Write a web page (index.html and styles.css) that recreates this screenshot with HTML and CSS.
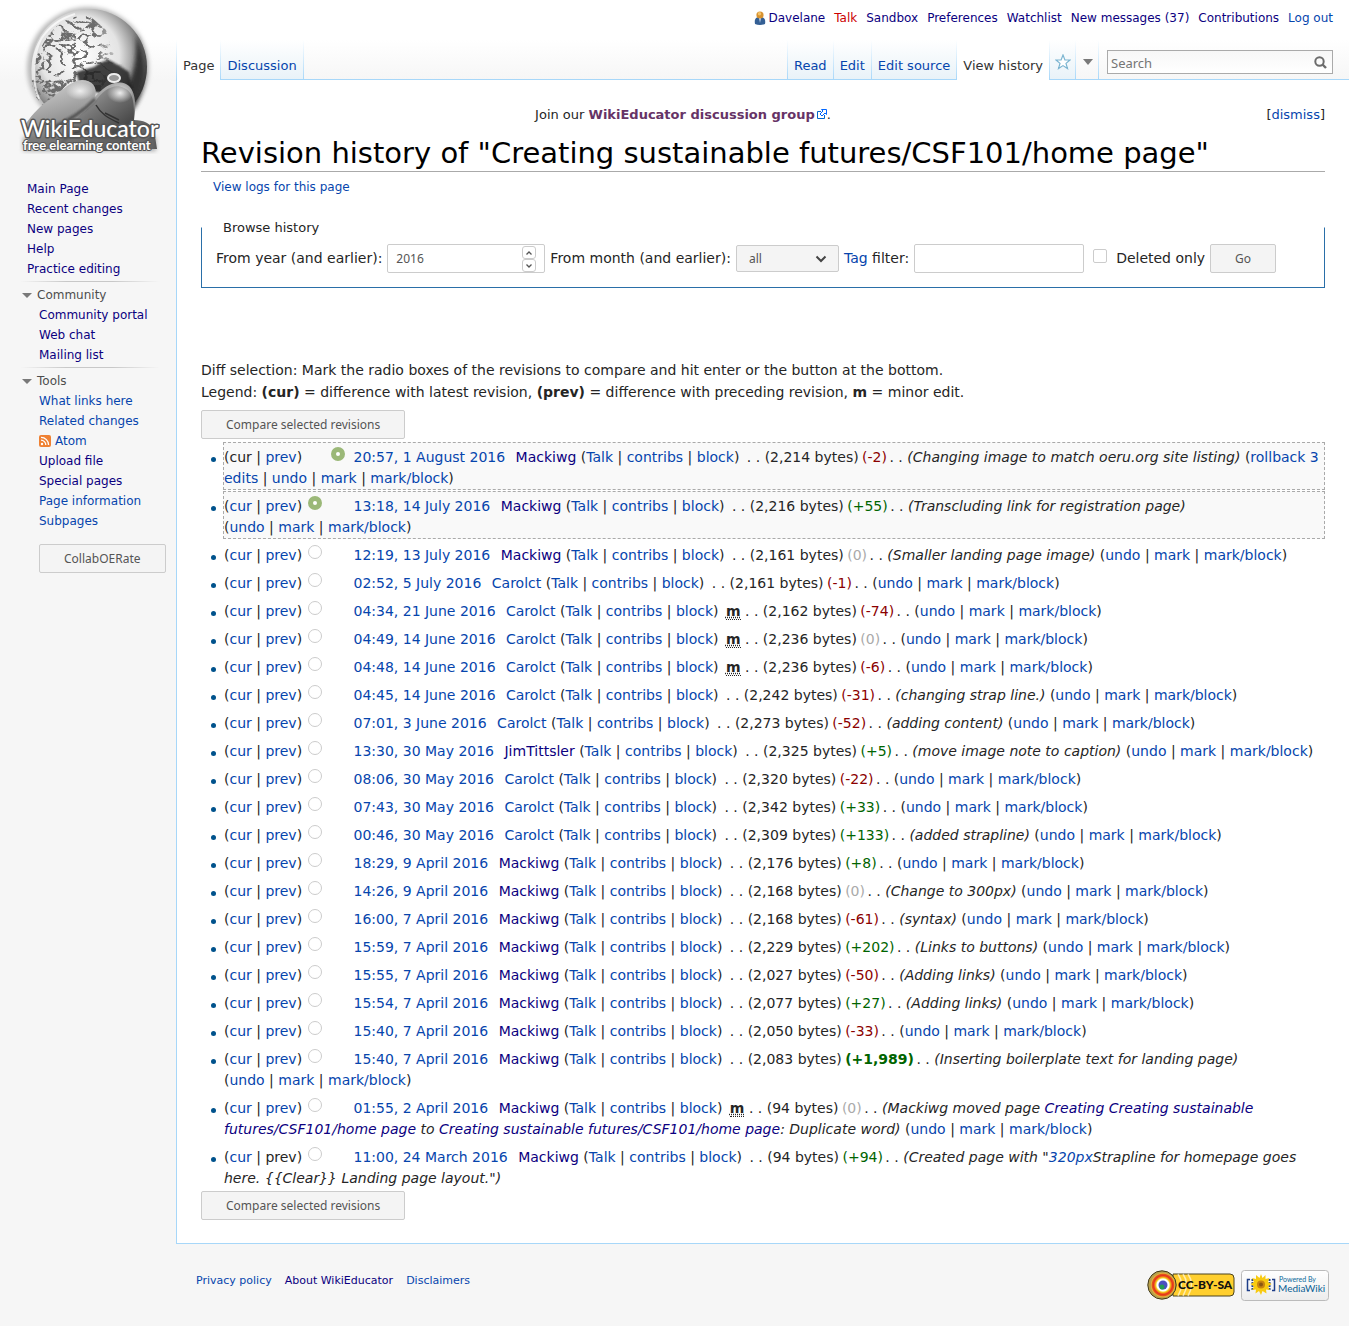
FILE: index.html
```html
<!DOCTYPE html>
<html lang="en">
<head>
<meta charset="utf-8">
<meta name="viewport" content="width=device-width, initial-scale=1">
<title>Revision history of "Creating sustainable futures/CSF101/home page" - WikiEducator</title>
<link rel="stylesheet" href="styles.css">
</head>
<body>
<div class="page">
<aside class="sidebar">
<a class="logo" href="#" aria-label="WikiEducator">
<svg width="160" height="160" viewBox="0 0 160 160">
<defs>
<radialGradient id="sphere" cx=".42" cy=".4" r=".62"><stop offset="0" stop-color="#fff"/><stop offset=".55" stop-color="#e4e4e4"/><stop offset=".8" stop-color="#8a8a8a"/><stop offset="1" stop-color="#333"/></radialGradient>
<linearGradient id="finger" x1="0" y1="0" x2="1" y2="1"><stop offset="0" stop-color="#ccc"/><stop offset=".45" stop-color="#777"/><stop offset="1" stop-color="#222"/></linearGradient>
<linearGradient id="thumb" x1="0" y1="0" x2=".6" y2="1"><stop offset="0" stop-color="#ddd"/><stop offset=".55" stop-color="#929292"/><stop offset="1" stop-color="#4c4c4c"/></linearGradient>
<radialGradient id="tip"><stop offset="0" stop-color="#eee"/><stop offset="1" stop-color="#eee" stop-opacity="0"/></radialGradient>
<linearGradient id="fade"><stop offset="0" stop-color="#fff"/><stop offset=".55" stop-color="#fff"/><stop offset=".8" stop-color="#000"/></linearGradient>
<mask id="land"><rect x="30" y="8" width="118" height="110" fill="url(#fade)"/></mask>
<filter id="relief" x="0" y="0" width="1" height="1"><feTurbulence type="turbulence" baseFrequency=".08 .11" numOctaves="4" seed="8"/><feColorMatrix values="0 0 0 0 .15  0 0 0 0 .15  0 0 0 0 .15  -10 0 0 0 2.8"/><feComposite in2="SourceGraphic" operator="in"/></filter>
<filter id="soft" x="-.2" y="-.2" width="1.4" height="1.4"><feGaussianBlur stdDeviation="2"/></filter>
<filter id="edge" x="-.2" y="-.2" width="1.4" height="1.4"><feGaussianBlur stdDeviation="1"/></filter>
</defs>
<circle cx="88" cy="68" r="61" fill="#bbb" filter="url(#soft)"/>
<circle cx="89" cy="67" r="58" fill="url(#sphere)"/>
<path d="M136 35c12 24 11 52-3 75l-8-20c10-17 12-32 11-55Z" fill="#333" filter="url(#soft)"/>
<g mask="url(#land)"><path d="M48 36C61 18 79 14 91 17l15 13 6 22 14 15-2 22-34 4-44 16-11-13c-8-21 0-41 13-60Z" fill="#000" filter="url(#relief)"/></g>
<path d="M33 80c-4-31 12-57 42-66M42 37c-10 19-10 45-3 62" fill="none" stroke="#fff" stroke-width="2" opacity=".7"/>
<path d="M76 72q10-3 18-5 8-6 15-7 10 5 20 12l4 20-32 1-20-4Z" fill="#222" opacity=".85" filter="url(#edge)"/>
<ellipse cx="114" cy="78" rx="6" ry="4" fill="#999" stroke="#eee" stroke-width="2"/>
<path d="M24 126c6-8 13-18 25-26 10-7 22-20 33-20 10 0 16 7 13 17 8-10 20-18 31-13 9 4 11 20 8 36 10 0 17 4 20 10l3 19H32Z" fill="url(#thumb)"/>
<path d="M95 102c8-12 19-19 29-14 11 4 10 20 10 35l-4 28H50c6-16 27-32 45-49Z" fill="url(#finger)"/>
<path d="M51 129c12-7 28-13 44-30M61 143c12-12 24-14 37-17" fill="none" stroke="#222" stroke-width="3" opacity=".6" filter="url(#edge)"/>
<path d="M96 105c5 9 12 13 23 18m-14-10 14 7m3 22 13-7" fill="none" stroke="#333" stroke-width="1.500"/>
<ellipse cx="80" cy="91" rx="14" ry="9" fill="url(#tip)"/><ellipse cx="120" cy="93" rx="13" ry="10" fill="url(#tip)"/>
<path d="M134 122c10-3 17 3 19 13l-19 13Z" fill="#666"/>
<rect x="23" y="137" width="133" height="14" fill="#777" opacity=".6" filter="url(#soft)"/>
<text class="logo-name" x="21" y="137">WikiEducator</text>
<text class="logo-motto" x="23" y="150">free elearning content</text>
</svg></a>
<nav aria-label="Navigation">
<ul class="side-list main-links">
<li><a class="v" href="#">Main Page</a></li>
<li><a class="v" href="#">Recent changes</a></li>
<li><a class="v" href="#">New pages</a></li>
<li><a class="v" href="#">Help</a></li>
<li><a class="v" href="#">Practice editing</a></li>
</ul>
<section class="portal"><h2>Community</h2>
<ul class="side-list">
<li><a class="v" href="#">Community portal</a></li>
<li><a class="v" href="#">Web chat</a></li>
<li><a class="v" href="#">Mailing list</a></li>
</ul></section>
<section class="portal"><h2>Tools</h2>
<ul class="side-list">
<li><a href="#">What links here</a></li>
<li><a href="#">Related changes</a></li>
<li><a class="feed" href="#"><svg width="12" height="12" viewBox="0 0 12 12"><rect width="12" height="12" rx="2" fill="#ef8133"/><circle cx="3" cy="9" r="1.2" fill="#fff"/><path d="M2 5.2a4.8 4.8 0 0 1 4.8 4.8M2 2.4A7.6 7.6 0 0 1 9.6 10" fill="none" stroke="#fff" stroke-width="1.3"/></svg>Atom</a></li>
<li><a class="v" href="#">Upload file</a></li>
<li><a class="v" href="#">Special pages</a></li>
<li><a href="#">Page information</a></li>
<li><a href="#">Subpages</a></li>
</ul></section>
<button class="btn collab" type="button">CollabOERate</button>
</nav>
</aside>
<div class="column">
<header>
<ul class="personal">
<li><svg width="12" height="14" viewBox="0 0 12 14"><path d="M1 13c-1-5 1-7 5-7s6 2 5 7c-3 1.3-7 1.3-10 0Z" fill="#345f94"/><path d="m5 7 1 5 1-5Z" fill="#cde"/><circle cx="6" cy="4" r="3.6" fill="#d8922f"/><circle cx="5.5" cy="2.8" r="1.7" fill="#f3c26a"/></svg><a class="v" href="#">Davelane</a></li>
<li><a class="new" href="#">Talk</a></li>
<li><a class="v" href="#">Sandbox</a></li>
<li><a class="v" href="#">Preferences</a></li>
<li><a class="v" href="#">Watchlist</a></li>
<li><a class="v" href="#">New messages (37)</a></li>
<li><a class="v" href="#">Contributions</a></li>
<li><a href="#">Log out</a></li>
</ul>
<div class="tabbar">
<ul class="tabs">
<li class="selected"><a href="#">Page</a></li>
<li><a href="#">Discussion</a></li>
</ul>
<ul class="tabs views">
<li><a href="#">Read</a></li>
<li><a href="#">Edit</a></li>
<li><a href="#">Edit source</a></li>
<li class="selected"><a href="#">View history</a></li>
<li class="watch"><a href="#" aria-label="Watch"><svg width="16" height="16" viewBox="0 0 16 16"><path d="m8 1 1.9 5H15l-4 3.4 1.5 5.1L8 11.6l-4.500 2.900L5 9.400 1 6h5.100Z" fill="#fff" stroke="#7cb5d1" stroke-width="1.200"/></svg></a></li>
<li class="more"><button type="button" aria-label="More"><svg width="10" height="6" viewBox="0 0 10 6"><path d="M0 0h10L5 6Z" fill="#797979"/></svg></button></li>
</ul>
<form class="search"><input type="search" placeholder="Search" aria-label="Search"><button type="button" aria-label="Go"><svg width="13" height="13" viewBox="0 0 13 13"><circle cx="5.500" cy="5.500" r="4.200" fill="none" stroke="#6c6c6c" stroke-width="2"/><path d="m8.500 8.500 3.500 3.500" stroke="#6c6c6c" stroke-width="2.400"/></svg></button></form>
</div>
</header>
<main class="content">
<div class="notice"><p>Join our <a class="group" href="#">WikiEducator discussion group<svg width="10" height="10" viewBox="0 0 10 10"><path d="M4 2.500H.5v7h7V6" fill="#fff" stroke="#06c"/><path d="M4.500.5h5v5L8 4 5 7 3 5l3-3Z" fill="#fff" stroke="#06f"/></svg></a>.</p><div class="dismiss">[<a href="#">dismiss</a>]</div></div>
<h1>Revision history of "Creating sustainable futures/CSF101/home page"</h1>
<p class="sub"><a href="#">View logs for this page</a></p>
<form>
<fieldset>
<legend>Browse history</legend>
<div class="filters">
<label for="year">From year (and earlier):</label>
<span class="number"><input id="year" type="number" value="2016"><span class="steps"><button type="button" aria-label="Later"><svg width="6" height="4" viewBox="0 0 6 4"><path d="m.5 3.500 2.500-2.500 2.500 2.500" fill="none" stroke="#555" stroke-width="1.300"/></svg></button><button type="button" aria-label="Earlier"><svg width="6" height="4" viewBox="0 0 6 4"><path d="m.5.500 2.500 2.500 2.500-2.500" fill="none" stroke="#555" stroke-width="1.300"/></svg></button></span></span>
<label for="month">From month (and earlier):</label>
<span class="pick"><select id="month"><option>all</option></select><svg width="12" height="8" viewBox="0 0 12 8"><path d="m1.500 1.500 4.500 4.500 4.500-4.500" fill="none" stroke="#444" stroke-width="2"/></svg></span>
<label for="tag"><a href="#">Tag</a> filter:</label>
<input id="tag" class="tag" type="text">
<input id="deleted" class="check" type="checkbox"><label for="deleted">Deleted only</label>
<button class="btn go" type="button">Go</button>
</div>
</fieldset>
</form>
<form>
<p class="explain">Diff selection: Mark the radio boxes of the revisions to compare and hit enter or the button at the bottom.<br>Legend: <b>(cur)</b> = difference with latest revision, <b>(prev)</b> = difference with preceding revision, <b>m</b> = minor edit.</p>
<button class="btn compare" type="button">Compare selected revisions</button>
<ul class="history">
<li class="on">(cur | <a href="#">prev</a>) <input class="off" type="radio" name="old" disabled aria-label="Older"> <input type="radio" name="new" checked aria-label="Newer"> <a href="#">20:57, 1 August 2016</a> <span class="user"><a class="v" href="#">Mackiwg</a> (<a href="#">Talk</a> | <a href="#">contribs</a> | <a href="#">block</a>)</span> . . (2,214 bytes) <span class="neg">(-2)</span> . . <i>(Changing image to match oeru.org site listing)</i> (<a href="#">rollback 3 edits</a> | <a href="#">undo</a> | <a href="#">mark</a> | <a href="#">mark/block</a>)</li>
<li class="on">(<a href="#">cur</a> | <a href="#">prev</a>) <input type="radio" name="old" checked aria-label="Older"> <input class="off" type="radio" name="new" aria-label="Newer"> <a href="#">13:18, 14 July 2016</a> <span class="user"><a class="v" href="#">Mackiwg</a> (<a href="#">Talk</a> | <a href="#">contribs</a> | <a href="#">block</a>)</span> . . (2,216 bytes) <span class="pos">(+55)</span> . . <i>(Transcluding link for registration page)</i> <span class="acts">(<a href="#">undo</a> | <a href="#">mark</a> | <a href="#">mark/block</a>)</span></li>
<li>(<a href="#">cur</a> | <a href="#">prev</a>) <input type="radio" name="old" aria-label="Older"> <input class="off" type="radio" name="new" aria-label="Newer"> <a href="#">12:19, 13 July 2016</a> <span class="user"><a class="v" href="#">Mackiwg</a> (<a href="#">Talk</a> | <a href="#">contribs</a> | <a href="#">block</a>)</span> . . (2,161 bytes) <span class="nil">(0)</span> . . <i>(Smaller landing page image)</i> (<a href="#">undo</a> | <a href="#">mark</a> | <a href="#">mark/block</a>)</li>
<li>(<a href="#">cur</a> | <a href="#">prev</a>) <input type="radio" name="old" aria-label="Older"> <input class="off" type="radio" name="new" aria-label="Newer"> <a href="#">02:52, 5 July 2016</a> <span class="user"><a href="#">Carolct</a> (<a href="#">Talk</a> | <a href="#">contribs</a> | <a href="#">block</a>)</span> . . (2,161 bytes) <span class="neg">(-1)</span> . . (<a href="#">undo</a> | <a href="#">mark</a> | <a href="#">mark/block</a>)</li>
<li>(<a href="#">cur</a> | <a href="#">prev</a>) <input type="radio" name="old" aria-label="Older"> <input class="off" type="radio" name="new" aria-label="Newer"> <a href="#">04:34, 21 June 2016</a> <span class="user"><a href="#">Carolct</a> (<a href="#">Talk</a> | <a href="#">contribs</a> | <a href="#">block</a>)</span> <abbr title="minor edit">m</abbr> . . (2,162 bytes) <span class="neg">(-74)</span> . . (<a href="#">undo</a> | <a href="#">mark</a> | <a href="#">mark/block</a>)</li>
<li>(<a href="#">cur</a> | <a href="#">prev</a>) <input type="radio" name="old" aria-label="Older"> <input class="off" type="radio" name="new" aria-label="Newer"> <a href="#">04:49, 14 June 2016</a> <span class="user"><a href="#">Carolct</a> (<a href="#">Talk</a> | <a href="#">contribs</a> | <a href="#">block</a>)</span> <abbr title="minor edit">m</abbr> . . (2,236 bytes) <span class="nil">(0)</span> . . (<a href="#">undo</a> | <a href="#">mark</a> | <a href="#">mark/block</a>)</li>
<li>(<a href="#">cur</a> | <a href="#">prev</a>) <input type="radio" name="old" aria-label="Older"> <input class="off" type="radio" name="new" aria-label="Newer"> <a href="#">04:48, 14 June 2016</a> <span class="user"><a href="#">Carolct</a> (<a href="#">Talk</a> | <a href="#">contribs</a> | <a href="#">block</a>)</span> <abbr title="minor edit">m</abbr> . . (2,236 bytes) <span class="neg">(-6)</span> . . (<a href="#">undo</a> | <a href="#">mark</a> | <a href="#">mark/block</a>)</li>
<li>(<a href="#">cur</a> | <a href="#">prev</a>) <input type="radio" name="old" aria-label="Older"> <input class="off" type="radio" name="new" aria-label="Newer"> <a href="#">04:45, 14 June 2016</a> <span class="user"><a href="#">Carolct</a> (<a href="#">Talk</a> | <a href="#">contribs</a> | <a href="#">block</a>)</span> . . (2,242 bytes) <span class="neg">(-31)</span> . . <i>(changing strap line.)</i> (<a href="#">undo</a> | <a href="#">mark</a> | <a href="#">mark/block</a>)</li>
<li>(<a href="#">cur</a> | <a href="#">prev</a>) <input type="radio" name="old" aria-label="Older"> <input class="off" type="radio" name="new" aria-label="Newer"> <a href="#">07:01, 3 June 2016</a> <span class="user"><a href="#">Carolct</a> (<a href="#">Talk</a> | <a href="#">contribs</a> | <a href="#">block</a>)</span> . . (2,273 bytes) <span class="neg">(-52)</span> . . <i>(adding content)</i> (<a href="#">undo</a> | <a href="#">mark</a> | <a href="#">mark/block</a>)</li>
<li>(<a href="#">cur</a> | <a href="#">prev</a>) <input type="radio" name="old" aria-label="Older"> <input class="off" type="radio" name="new" aria-label="Newer"> <a href="#">13:30, 30 May 2016</a> <span class="user"><a class="v" href="#">JimTittsler</a> (<a href="#">Talk</a> | <a href="#">contribs</a> | <a href="#">block</a>)</span> . . (2,325 bytes) <span class="pos">(+5)</span> . . <i>(move image note to caption)</i> (<a href="#">undo</a> | <a href="#">mark</a> | <a href="#">mark/block</a>)</li>
<li>(<a href="#">cur</a> | <a href="#">prev</a>) <input type="radio" name="old" aria-label="Older"> <input class="off" type="radio" name="new" aria-label="Newer"> <a href="#">08:06, 30 May 2016</a> <span class="user"><a href="#">Carolct</a> (<a href="#">Talk</a> | <a href="#">contribs</a> | <a href="#">block</a>)</span> . . (2,320 bytes) <span class="neg">(-22)</span> . . (<a href="#">undo</a> | <a href="#">mark</a> | <a href="#">mark/block</a>)</li>
<li>(<a href="#">cur</a> | <a href="#">prev</a>) <input type="radio" name="old" aria-label="Older"> <input class="off" type="radio" name="new" aria-label="Newer"> <a href="#">07:43, 30 May 2016</a> <span class="user"><a href="#">Carolct</a> (<a href="#">Talk</a> | <a href="#">contribs</a> | <a href="#">block</a>)</span> . . (2,342 bytes) <span class="pos">(+33)</span> . . (<a href="#">undo</a> | <a href="#">mark</a> | <a href="#">mark/block</a>)</li>
<li>(<a href="#">cur</a> | <a href="#">prev</a>) <input type="radio" name="old" aria-label="Older"> <input class="off" type="radio" name="new" aria-label="Newer"> <a href="#">00:46, 30 May 2016</a> <span class="user"><a href="#">Carolct</a> (<a href="#">Talk</a> | <a href="#">contribs</a> | <a href="#">block</a>)</span> . . (2,309 bytes) <span class="pos">(+133)</span> . . <i>(added strapline)</i> (<a href="#">undo</a> | <a href="#">mark</a> | <a href="#">mark/block</a>)</li>
<li>(<a href="#">cur</a> | <a href="#">prev</a>) <input type="radio" name="old" aria-label="Older"> <input class="off" type="radio" name="new" aria-label="Newer"> <a href="#">18:29, 9 April 2016</a> <span class="user"><a class="v" href="#">Mackiwg</a> (<a href="#">Talk</a> | <a href="#">contribs</a> | <a href="#">block</a>)</span> . . (2,176 bytes) <span class="pos">(+8)</span> . . (<a href="#">undo</a> | <a href="#">mark</a> | <a href="#">mark/block</a>)</li>
<li>(<a href="#">cur</a> | <a href="#">prev</a>) <input type="radio" name="old" aria-label="Older"> <input class="off" type="radio" name="new" aria-label="Newer"> <a href="#">14:26, 9 April 2016</a> <span class="user"><a class="v" href="#">Mackiwg</a> (<a href="#">Talk</a> | <a href="#">contribs</a> | <a href="#">block</a>)</span> . . (2,168 bytes) <span class="nil">(0)</span> . . <i>(Change to 300px)</i> (<a href="#">undo</a> | <a href="#">mark</a> | <a href="#">mark/block</a>)</li>
<li>(<a href="#">cur</a> | <a href="#">prev</a>) <input type="radio" name="old" aria-label="Older"> <input class="off" type="radio" name="new" aria-label="Newer"> <a href="#">16:00, 7 April 2016</a> <span class="user"><a class="v" href="#">Mackiwg</a> (<a href="#">Talk</a> | <a href="#">contribs</a> | <a href="#">block</a>)</span> . . (2,168 bytes) <span class="neg">(-61)</span> . . <i>(syntax)</i> (<a href="#">undo</a> | <a href="#">mark</a> | <a href="#">mark/block</a>)</li>
<li>(<a href="#">cur</a> | <a href="#">prev</a>) <input type="radio" name="old" aria-label="Older"> <input class="off" type="radio" name="new" aria-label="Newer"> <a href="#">15:59, 7 April 2016</a> <span class="user"><a class="v" href="#">Mackiwg</a> (<a href="#">Talk</a> | <a href="#">contribs</a> | <a href="#">block</a>)</span> . . (2,229 bytes) <span class="pos">(+202)</span> . . <i>(Links to buttons)</i> (<a href="#">undo</a> | <a href="#">mark</a> | <a href="#">mark/block</a>)</li>
<li>(<a href="#">cur</a> | <a href="#">prev</a>) <input type="radio" name="old" aria-label="Older"> <input class="off" type="radio" name="new" aria-label="Newer"> <a href="#">15:55, 7 April 2016</a> <span class="user"><a class="v" href="#">Mackiwg</a> (<a href="#">Talk</a> | <a href="#">contribs</a> | <a href="#">block</a>)</span> . . (2,027 bytes) <span class="neg">(-50)</span> . . <i>(Adding links)</i> (<a href="#">undo</a> | <a href="#">mark</a> | <a href="#">mark/block</a>)</li>
<li>(<a href="#">cur</a> | <a href="#">prev</a>) <input type="radio" name="old" aria-label="Older"> <input class="off" type="radio" name="new" aria-label="Newer"> <a href="#">15:54, 7 April 2016</a> <span class="user"><a class="v" href="#">Mackiwg</a> (<a href="#">Talk</a> | <a href="#">contribs</a> | <a href="#">block</a>)</span> . . (2,077 bytes) <span class="pos">(+27)</span> . . <i>(Adding links)</i> (<a href="#">undo</a> | <a href="#">mark</a> | <a href="#">mark/block</a>)</li>
<li>(<a href="#">cur</a> | <a href="#">prev</a>) <input type="radio" name="old" aria-label="Older"> <input class="off" type="radio" name="new" aria-label="Newer"> <a href="#">15:40, 7 April 2016</a> <span class="user"><a class="v" href="#">Mackiwg</a> (<a href="#">Talk</a> | <a href="#">contribs</a> | <a href="#">block</a>)</span> . . (2,050 bytes) <span class="neg">(-33)</span> . . (<a href="#">undo</a> | <a href="#">mark</a> | <a href="#">mark/block</a>)</li>
<li>(<a href="#">cur</a> | <a href="#">prev</a>) <input type="radio" name="old" aria-label="Older"> <input class="off" type="radio" name="new" aria-label="Newer"> <a href="#">15:40, 7 April 2016</a> <span class="user"><a class="v" href="#">Mackiwg</a> (<a href="#">Talk</a> | <a href="#">contribs</a> | <a href="#">block</a>)</span> . . (2,083 bytes) <b class="pos">(+1,989)</b> . . <i>(Inserting boilerplate text for landing page)</i> <span class="acts">(<a href="#">undo</a> | <a href="#">mark</a> | <a href="#">mark/block</a>)</span></li>
<li>(<a href="#">cur</a> | <a href="#">prev</a>) <input type="radio" name="old" aria-label="Older"> <input class="off" type="radio" name="new" aria-label="Newer"> <a href="#">01:55, 2 April 2016</a> <span class="user"><a class="v" href="#">Mackiwg</a> (<a href="#">Talk</a> | <a href="#">contribs</a> | <a href="#">block</a>)</span> <abbr title="minor edit">m</abbr> . . (94 bytes) <span class="nil">(0)</span> . . <i>(Mackiwg moved page <a class="v" href="#">Creating Creating sustainable futures/CSF101/home page</a> to <a class="v" href="#">Creating sustainable futures/CSF101/home page</a>: Duplicate word)</i> (<a href="#">undo</a> | <a href="#">mark</a> | <a href="#">mark/block</a>)</li>
<li>(<a href="#">cur</a> | prev) <input type="radio" name="old" aria-label="Older"> <input class="off" type="radio" name="new" aria-label="Newer"> <a href="#">11:00, 24 March 2016</a> <span class="user"><a class="v" href="#">Mackiwg</a> (<a href="#">Talk</a> | <a href="#">contribs</a> | <a href="#">block</a>)</span> . . (94 bytes) <span class="pos">(+94)</span> . . <i>(Created page with "<a href="#">320px</a>Strapline for homepage goes here. {{Clear}} Landing page layout.")</i></li>
</ul>
<button class="btn compare" type="button">Compare selected revisions</button>
</form>
</main>
</div>
</div>
<footer>
<ul class="places">
<li><a href="#">Privacy policy</a></li>
<li><a class="v" href="#">About WikiEducator</a></li>
<li><a href="#">Disclaimers</a></li>
</ul>
<div class="badges">
<a href="#" aria-label="CC-BY-SA"><svg width="88" height="31" viewBox="0 0 88 31"><defs><radialGradient id="ring"><stop offset=".3" stop-color="#fff"/><stop offset=".5" stop-color="#fff"/><stop offset=".6" stop-color="#f5d21c"/><stop offset=".78" stop-color="#e8301c"/><stop offset=".9" stop-color="#e2561c"/><stop offset="1" stop-color="#f3cc3c"/></radialGradient></defs><path d="M26 4h57q4 0 4 4v14q0 4-4 4H26Z" fill="#ffcf2e" stroke="#4b431f"/><circle cx="15" cy="15" r="14.200" fill="#b9a04a" stroke="#40391d"/><path d="M31 4q7 10 0 22M36 4q7 10 0 22M41 4q7 10 0 22" fill="none" stroke="#fff" stroke-width="1.500" opacity=".6"/><circle cx="16" cy="15" r="12" fill="url(#ring)"/><circle cx="16" cy="15" r="4.500" fill="#4a4fc0"/><circle cx="15" cy="17" r="2.500" fill="#259a50"/><text class="cc" x="31" y="19">CC-BY-SA</text></svg></a>
<a href="#" aria-label="Powered by MediaWiki"><svg width="88" height="31" viewBox="0 0 88 31"><defs><linearGradient id="plate" x2="0" y2="1"><stop offset="0" stop-color="#fff"/><stop offset="1" stop-color="#ececec"/></linearGradient></defs><rect x=".5" y=".5" width="87" height="30" rx="3" fill="url(#plate)" stroke="#bbb"/><path d="M9 9.500H6.500v11H9M31 9.500h2.500v11H31" fill="none" stroke="#1e3e88" stroke-width="1.500"/><path d="M11.500 9v12M28.500 9v12" stroke="#1e3e88" stroke-width="2" stroke-dasharray="2 1"/><path d="m20 4 1.500 4 3-3 0 4 4-1-1.500 4 3.500 2-3.500 2.500 2 3.500-4-.5.5 4-4-2.500L20 25l-2-4-3.500 2.500.5-4-4 .5 2-3.500L9.500 14l3.500-2-2-4 4 1 0-4 3.500 3Z" fill="#f8ca10"/><circle cx="20" cy="14.500" r="4" fill="#c78310"/><circle cx="20" cy="14.500" r="2" fill="#8a5712"/><text class="mw-small" x="38" y="12">Powered By</text><text class="mw-name" x="37" y="22">MediaWiki</text></svg></a>
</div>
</footer>
</body>
</html>
```
FILE: styles.css
```css
* { box-sizing: border-box; }
body {
  margin: 0;
  background: #f6f6f6 linear-gradient(#fff 40px, #f6f6f6 80px) 0 0 / 100% 80px no-repeat;
  color: #252525;
  font: 14px/21px "DejaVu Sans", sans-serif;
}
a { color: #0645ad; text-decoration: none; }
a:hover { text-decoration: underline; }
a.v { color: #0b0080; }
a.new { color: #cc0000; }
ul { list-style: none; margin: 0; padding: 0; }
p, h1, h2 { margin: 0; font-weight: normal; }
button, input, select { font: 12px "Noto Sans", sans-serif; color: #555; }
button { cursor: pointer; }

.page { display: grid; grid-template-columns: 176px minmax(0, 1fr); }

/* Sidebar */
.sidebar { font-size: 12px; line-height: 20px; }
.logo, .logo svg { display: block; }
.logo-name, .logo-motto {
  font-family: Lato, sans-serif;
  fill: #fff;
  stroke: #555;
  paint-order: stroke;
  stroke-linejoin: round;
}
.logo-name { font-size: 23px; font-weight: 500; stroke-width: 3px; }
.logo-motto { font-size: 13px; font-weight: 700; stroke-width: 2px; }
.main-links { padding: 19px 0 0 27px; }
.portal {
  margin: 2px 16px 0 20px;
  padding-top: 5px;
  background: linear-gradient(90deg, #f6f6f6, #c8c8c8 33%, #c8c8c8 66%, #f6f6f6) 0 0 / 100% 1px no-repeat;
}
.portal h2 {
  display: flex;
  align-items: center;
  gap: 5px;
  padding-left: 2px;
  font-size: 12px;
  line-height: 19px;
  color: #4d4d4d;
}
.portal h2::before {
  content: "";
  border: 5px solid transparent;
  border-top-color: #797979;
  border-bottom-width: 0;
}
.portal .side-list { padding-left: 19px; }
.feed { display: flex; align-items: center; gap: 4px; }

.btn {
  height: 29px;
  padding: 0 24px;
  border: 1px solid #ccc;
  border-radius: 2px;
  background: #f4f4f4;
}
.collab { margin: 13px 0 20px 39px; }

/* Header */
.personal {
  display: flex;
  justify-content: flex-end;
  gap: 9px;
  height: 40px;
  padding: 8px 16px 0 0;
  font-size: 12px;
  line-height: 20px;
}
.personal li { display: flex; }
.personal svg { margin: 3px 3px 0 0; }
.tabbar, .tabs li {
  background-image: linear-gradient(#a7d7f9, #a7d7f9), linear-gradient(#fff, #a7d7f9);
  background-size: 100% 1px, 1px 100%;
  background-repeat: no-repeat;
}
.tabbar {
  display: flex;
  height: 40px;
  padding-left: 1px;
  background-position: 0 100%, 0 0;
}
.tabs { display: flex; font-size: 13px; }
.tabs li {
  padding: 15px 7px 0 6px;
  background-image: linear-gradient(#a7d7f9, #a7d7f9), linear-gradient(#fff, #a7d7f9), linear-gradient(#fff, #e8f2f8);
  background-size: 100% 1px, 1px 100%, 100% 100%;
  background-position: 0 100%, 100% 0, 0 0;
}
.tabs .selected { background-color: #fff; background-image: linear-gradient(#fff, #a7d7f9); background-size: 1px 100%; background-position: 100% 0; }
.selected a { color: #333; }
.views {
  margin-left: auto;
  padding-left: 1px;
  background: linear-gradient(#fff, #a7d7f9) 0 0 / 1px 100% no-repeat;
}
.tabs .watch { padding: 14px 5px 0; }
.watch a, .watch svg { display: block; }
.tabs .more { padding: 0; background-image: linear-gradient(#a7d7f9, #a7d7f9), linear-gradient(#fff, #a7d7f9); background-size: 100% 1px, 1px 100%; background-position: 0 100%, 100% 0; }
.more button { width: 23px; height: 39px; padding: 5px 0 0; border: 0; background: none; display: grid; place-content: center; }
.search {
  display: flex;
  align-items: center;
  width: 226px;
  height: 24px;
  margin: 10px 16px 0 8px;
  border: 1px solid #aaa;
  background: linear-gradient(#f7f7f7, #fff);
}
.search input { flex: 1; min-width: 0; padding: 2px 3px 0; border: 0; outline: 0; background: none; font-size: 13px; appearance: none; }
.search input::placeholder { color: #757575; }
.search button { display: flex; padding: 0 5px 0 0; border: 0; background: none; }

/* Content */
.content {
  padding: 25px 24px 23px;
  border: solid #a7d7f9;
  border-width: 0 0 1px 1px;
  background: #fff;
}
.notice { display: flex; font-size: 13px; line-height: 20px; }
.notice p { flex: 1; text-align: center; }
.dismiss { width: 160px; text-align: right; }
.group { color: #636; font-weight: bold; }
.group svg { margin-left: 2px; }
h1 {
  margin-top: 10px;
  border-bottom: 1px solid #aaa;
  font-size: 29px;
  line-height: 36px;
  color: #000;
}
.sub { margin: 5px 0 0 12px; font-size: 12px; line-height: 20px; }
fieldset {
  margin: 20px 0 71px;
  padding: 6px 14px 14px;
  border: 1px solid #2a6fa8;
  border-top-color: transparent;
}
legend { margin-left: 7px; padding: 0; font-size: 13px; line-height: 21px; }
.filters { display: flex; flex-wrap: wrap; align-items: center; gap: 5px; }
.number, .tag {
  height: 29px;
  border: 1px solid #ccc;
  border-radius: 2px;
  background: #fff;
}
.number { display: flex; width: 158px; }
.number input {
  flex: 1;
  min-width: 0;
  padding: 0 8px;
  border: 0;
  background: none;
  appearance: textfield;
}
.number input::-webkit-inner-spin-button { display: none; }
.steps { display: flex; flex-direction: column; padding: 1px 8px 0 0; }
.steps button {
  display: grid;
  place-content: center;
  width: 14px;
  height: 13px;
  padding: 0;
  border: 1px solid #ccc;
  border-radius: 3px;
  background: #fff;
}
.pick { display: grid; grid-template-columns: 1fr 24px; align-items: center; width: 103px; height: 27px; }
.pick select {
  grid-area: 1 / 1 / 2 / 3;
  height: 27px;
  padding: 0 12px;
  border: 1px solid #ccc;
  border-radius: 2px;
  background: #f4f4f4;
  appearance: none;
}
.pick svg { grid-area: 1 / 2; pointer-events: none; }
.tag { width: 170px; }
.check {
  width: 14px;
  height: 14px;
  margin: 0 4px 6px;
  border: 1px solid #ccc;
  border-radius: 2px;
  background: #fff;
  appearance: none;
}
.explain { line-height: 22px; margin-bottom: 7px; }
.compare { display: block; }

/* Revision list */
.history {
  margin: 3px 0 0 22px;
  list-style-image: url("data:image/svg+xml,%3Csvg xmlns='http://www.w3.org/2000/svg' width='5' height='5'%3E%3Ccircle cx='2.5' cy='2.5' r='2.5' fill='%2300528c'/%3E%3C/svg%3E");
}
.history li { margin-bottom: 1px; border: 1px solid transparent; }
.history .on { border: 1px dashed #aaa; background: #f9f9f9; }
.history input {
  width: 14px;
  height: 14px;
  margin: 4px 4px 1px 1px;
  border: 1px solid #ccc;
  border-radius: 50%;
  background: #fff;
  vertical-align: baseline;
  appearance: none;
}
.history input:checked { border: 5px solid #9bb878; }
.history .off { visibility: hidden; }
.user { margin: 0 3px 0 6px; }
.acts { white-space: nowrap; }
abbr { border-bottom: 1px dotted #222; font-weight: bold; text-decoration: underline dotted; }
.pos, .neg, .nil { margin: 0 -2px 0 -1px; }
.pos { color: #006400; }
.neg { color: #8b0000; }
.nil { color: #aaa; }

/* Footer */
footer {
  display: flex;
  justify-content: space-between;
  padding: 26px 20px 25px 196px;
  font-size: 11px;
  line-height: 22px;
}
.places { display: flex; gap: 13px; }
.badges { display: flex; gap: 6px; }
.badges svg { display: block; }
.cc { font: 900 12px Lato, sans-serif; fill: #111; }
.mw-small { font: 7px Lato, sans-serif; fill: #0b6a9c; }
.mw-name { font: 10px Lato, sans-serif; fill: #0b5f94; }
```
